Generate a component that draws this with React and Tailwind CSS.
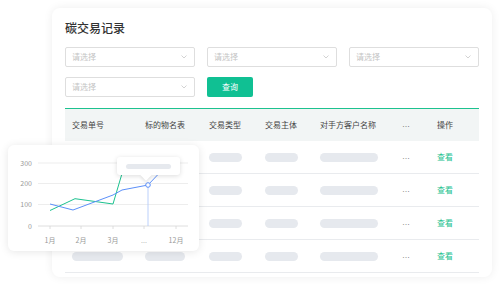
const font = { fontFamily: '"Noto Sans CJK SC", "Noto Sans", sans-serif' };
const latin = { fontFamily: '"Liberation Sans", Arial, sans-serif' };

const headers = ["交易单号", "标的物名表", "交易类型", "交易主体", "对手方客户名称", "…", "操作"];
const pills = [51, 40, 33, 33, 58];

function Select() {
  return (
    <div className="h-5 flex items-center justify-between border border-[#dedede] rounded-[2px] pl-[6px] pr-[7px]">
      <span className="text-[8px] text-[#c4c4c4] leading-none">请选择</span>
      <svg width="6" height="4" viewBox="0 0 6 4" className="text-[#c8c8c8]">
        <polyline points="0.5,0.5 3,3 5.5,0.5" fill="none" stroke="currentColor" strokeWidth="0.8" />
      </svg>
    </div>
  );
}

function Row() {
  return (
    <div className="grid grid-cols-[80px_64px_56px_55px_82px_35px_1fr] items-center h-[33px] border-b border-[#e9ebee]">
      {pills.map((w, i) => (
        <div key={i} className={i === 0 ? "pl-[7px]" : ""}>
          <div className="h-[9px] rounded-full bg-[#e6e9ee]" style={{ width: w }} />
        </div>
      ))}
      <div className="text-[8px] text-[#555] leading-none" style={latin}>…</div>
      <div className="text-[8px] text-[#1cc28f] leading-none">查看</div>
    </div>
  );
}

function Chart() {
  const grid = [
    { y: 163, label: "300" },
    { y: 183.5, label: "200" },
    { y: 204.5, label: "100" },
  ];
  const ticks = [
    { x: 50, label: "1月" },
    { x: 81, label: "2月" },
    { x: 113, label: "3月" },
    { x: 144, label: "..." },
    { x: 176, label: "12月" },
  ];
  return (
    <div className="absolute left-[8px] top-[145px] w-[191px] h-[106px] rounded-md bg-white shadow-[0_1px_8px_rgba(0,0,0,0.1)]">
      <svg width="191" height="106" className="absolute inset-0">
        <g transform="translate(-8,-145)" fontSize="7" fill="#999" style={font}>
          {grid.map((g) => (
            <g key={g.label}>
              <line x1="38" x2="188" y1={g.y} y2={g.y} stroke="#e8e8e8" strokeWidth="0.8" />
              <text x="32" y={g.y + 2.5} textAnchor="end">{g.label}</text>
            </g>
          ))}
          <line x1="38" x2="188" y1="226" y2="226" stroke="#d6d6d6" strokeWidth="0.8" />
          <text x="32" y="228.5" textAnchor="end">0</text>
          {ticks.map((t) => (
            <g key={t.x}>
              <line x1={t.x} x2={t.x} y1="226" y2="229" stroke="#d6d6d6" strokeWidth="0.8" />
              <text x={t.x} y="243" textAnchor="middle" style={t.label === "..." ? latin : undefined}>
                {t.label}
              </text>
            </g>
          ))}
          <line x1="148" x2="148" y1="187" y2="226" stroke="#b3cbfb" strokeWidth="0.9" />
          <polyline
            points="50,210.5 75,198.7 113,204 126,160"
            fill="none"
            stroke="#1cc28f"
            strokeWidth="1"
          />
          <polyline
            points="50,204 73,210 113,195 122,190 148,185 166,166"
            fill="none"
            stroke="#5b8ff9"
            strokeWidth="1"
          />
          <circle cx="148" cy="185" r="2.3" fill="#fff" stroke="#5b8ff9" strokeWidth="1" />
        </g>
      </svg>
      <div className="absolute left-[109px] top-[12px] w-[63px] h-[18px] rounded-[3px] bg-white shadow-[0_1px_5px_rgba(0,0,0,0.14)] flex items-center justify-center">
        <div className="w-[45px] h-[5px] rounded-full bg-[#e6e9ee]" />
        <div className="absolute left-[25px] -bottom-[4px] w-[8px] h-[8px] bg-white rotate-45 shadow-[2px_2px_3px_rgba(0,0,0,0.08)]" />
      </div>
    </div>
  );
}

export default function App() {
  return (
    <div className="relative w-[500px] h-[288px] bg-white overflow-hidden" style={font}>
      <div className="ml-[52px] mt-[8px] w-[440px] h-[269px] rounded-lg bg-white shadow-[0_0_10px_rgba(0,0,0,0.07)] px-[13px] pt-[11px]">
        <h1 className="text-[12px] leading-[18px] text-[#333] font-medium">碳交易记录</h1>
        <div className="grid grid-cols-3 gap-x-3 gap-y-[10px] mt-[10px]">
          <Select />
          <Select />
          <Select />
          <Select />
          <button className="h-5 w-[46px] rounded-[2px] bg-[#10c093] text-white text-[8px] leading-none">
            查询
          </button>
        </div>
        <div className="mt-[11px] border-t-[1.5px] border-[#1cc28f]">
          <div className="grid grid-cols-[80px_64px_56px_55px_82px_35px_1fr] items-center h-[32px] bg-[#f2f5f5] text-[8px] text-[#444] leading-none">
            {headers.map((h, i) => (
              <div key={h} className={i === 0 ? "pl-[7px]" : ""} style={h === "…" ? latin : undefined}>
                {h}
              </div>
            ))}
          </div>
          <Row />
          <Row />
          <Row />
          <Row />
        </div>
      </div>
      <Chart />
    </div>
  );
}
